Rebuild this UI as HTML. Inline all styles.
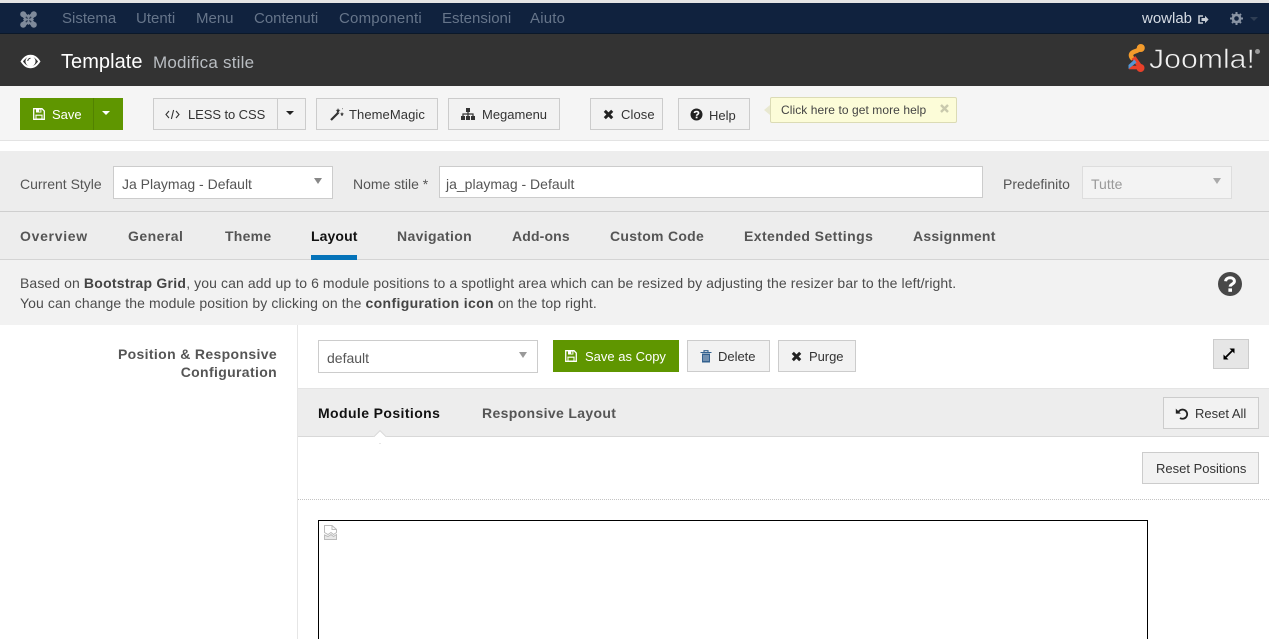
<!DOCTYPE html>
<html lang="it"><head><meta charset="utf-8"><title>Template</title>
<style>
html,body{margin:0;padding:0;width:1269px;height:639px;overflow:hidden;background:#fff;font-family:"Liberation Sans",Arial,sans-serif;color:#333}
*{box-sizing:border-box}
#p{position:absolute;left:0;top:0;width:1269px;height:639px;overflow:hidden}
.a{position:absolute}
.t{position:absolute;white-space:nowrap;line-height:18px}
.nav{font-size:15px;color:#66758a;top:10px}
.btn{position:absolute;border:1px solid #ccc;background:#f2f2f2;height:32px;font-size:13px;line-height:31px;color:#333;white-space:nowrap;padding-left:0}
.btn span{position:absolute;top:0}
.btn svg{position:absolute}
.tab{position:absolute;top:227px;font-size:14px;font-weight:bold;color:#555;letter-spacing:.35px;line-height:18px;white-space:nowrap}
.sel{position:absolute;background:#fff;border:1px solid #ccc;height:33px;font-size:14px;line-height:34px;color:#555;padding-left:8px}
.sel i{position:absolute;width:0;height:0;border-left:4px solid transparent;border-right:4px solid transparent;border-top:6px solid #888;}
</style></head><body><div id="p">
<div class="a" style="left:0;top:0;width:1269px;height:3px;background:#e4e4e4"></div>
<div class="a" style="left:0;top:3px;width:1269px;height:31px;background:#10223e"></div>
<div class="a" style="left:0;top:33px;width:1269px;height:1px;background:#0b1829"></div>
<div class="a" style="left:0;top:34px;width:1269px;height:52px;background:#333"></div>
<div class="a" style="left:0;top:86px;width:1269px;height:54px;background:#f5f5f5"></div>
<div class="a" style="left:0;top:140px;width:1269px;height:1px;background:#e3e3e3"></div>
<div class="a" style="left:0;top:151px;width:1269px;height:109px;background:#ededed"></div>
<div class="a" style="left:0;top:211px;width:1269px;height:1px;background:#cfcfcf"></div>
<div class="a" style="left:0;top:259px;width:1269px;height:1px;background:#d4d4d4"></div>
<div class="a" style="left:0;top:260px;width:1269px;height:65px;background:#f2f2f2"></div>

<!-- top nav -->
<svg class="a" style="left:20px;top:11px" width="17" height="17" viewBox="0 0 17 17"><path d="M3.2 3.2L13.8 13.8M13.8 3.2L3.2 13.8" stroke="#7f8a9a" stroke-width="5"/><circle cx="3.2" cy="3.2" r="3" fill="#7f8a9a"/><circle cx="13.8" cy="3.2" r="3" fill="#7f8a9a"/><circle cx="3.2" cy="13.8" r="3" fill="#7f8a9a"/><circle cx="13.8" cy="13.8" r="3" fill="#7f8a9a"/><path d="M8.5 3L14 8.5 8.5 14 3 8.5Z" fill="#7f8a9a"/><path d="M5.8 5.8L7.6 7.6M11.2 5.8L9.4 7.6M5.8 11.2L7.6 9.4M11.2 11.2L9.4 9.4" stroke="#2c3a50" stroke-width="1.3"/></svg>
<div class="t nav" style="left:62px">Sistema</div>
<div class="t nav" style="left:136px">Utenti</div>
<div class="t nav" style="left:196px">Menu</div>
<div class="t nav" style="left:254px">Contenuti</div>
<div class="t nav" style="left:339px;letter-spacing:.2px">Componenti</div>
<div class="t nav" style="left:442px">Estensioni</div>
<div class="t nav" style="left:530px;letter-spacing:.2px">Aiuto</div>
<div class="t" style="left:1142px;top:10px;font-size:15px;color:#d5dbe3">wowlab</div>
<svg class="a" style="left:1198px;top:15px" width="11" height="9" viewBox="0 0 11 9"><path d="M5 1H1V8H5" fill="none" stroke="#c8ced6" stroke-width="1.6"/><path d="M3.5 3H7V0.8L10.6 4.5 7 8.2V6H3.5Z" fill="#c8ced6"/></svg>
<svg class="a" style="left:1230px;top:12px" width="13" height="13" viewBox="0 0 13 13"><circle cx="6.5" cy="6.5" r="3.6" fill="none" stroke="#8994a4" stroke-width="2.6"/><path d="M6.5 0V13M0 6.5H13M2 2L11 11M11 2L2 11" stroke="#8994a4" stroke-width="2" stroke-dasharray="2.2 8.6 2.2 0"/></svg>
<div class="a" style="left:1250px;top:17px;border-left:4px solid transparent;border-right:4px solid transparent;border-top:4px solid #2f3e54"></div>

<!-- header -->
<svg class="a" style="left:20px;top:54px" width="21" height="15" viewBox="0 0 21 15"><path d="M0.5 7.5C4 2.2 7 0.8 10.5 0.8S17 2.2 20.5 7.5C17 12.8 14 14.2 10.5 14.2S4 12.8 0.5 7.5Z" fill="#fff"/><path d="M3 7.5C5 4.8 6.5 3.8 7.4 3.4A5 5 0 1 0 13.6 3.4C14.5 3.8 16 4.8 18 7.5 16 10.2 13.5 12.4 10.5 12.4S5 10.2 3 7.5Z" fill="#333"/><circle cx="10.5" cy="7" r="4.1" fill="#fff"/><path d="M10.5 4.2A2.8 2.8 0 0 0 7.8 7" fill="none" stroke="#333" stroke-width="1"/></svg>
<div class="t" style="left:61px;top:51px;font-size:20px;line-height:22px;color:#fff;letter-spacing:.05px">Template</div>
<div class="t" style="left:153px;top:53px;font-size:17px;line-height:19px;color:#b9bdc2;letter-spacing:.22px">Modifica stile</div>
<svg class="a" style="left:1128px;top:43px" width="18" height="31" viewBox="0 0 18 31"><path d="M11.5 6C9 9 3.5 8 3 12 2.8 14 4 15 5 16" fill="none" stroke="#f39b2c" stroke-width="4.6"/><circle cx="12.8" cy="5" r="4" fill="#f39b2c"/><path d="M5.5 14.5L13 25" stroke="#e8412a" stroke-width="4.8"/><circle cx="12.5" cy="25" r="4" fill="#e8412a"/><path d="M1 24.5H11" stroke="#e8412a" stroke-width="3.6"/><path d="M0.5 22L6.5 16.5 8.5 19.5 0.5 26Z" fill="#5596d2"/></svg>
<div class="t" style="left:1149px;top:44px;font-size:27px;line-height:30px;color:#f0f0f0;-webkit-text-stroke:.6px #333;transform-origin:left top;transform:scaleX(1.12)">Joomla!</div>
<div class="a" style="left:1255px;top:49px;width:5px;height:5px;border-radius:3px;background:#9a9a9a"></div>

<!-- toolbar -->
<div class="a" style="left:20px;top:98px;width:103px;height:32px;background:#5f9600"></div>
<div class="a" style="left:93px;top:98px;width:1px;height:32px;background:#528200"></div>
<svg class="a" style="left:33px;top:108px" width="12" height="12" viewBox="0 0 12 12"><path fill="none" stroke="#fff" stroke-width="1.3" d="M.7.7H9L11.3 3V11.3H.7Z"/><path fill="#fff" d="M3 1H8.4V4.5H3ZM2.4 6.6H9.6V7.8H2.4Z"/><rect x="6.2" y="1.6" width="1.2" height="2.2" fill="#5f9600"/><path d="M3 7V11H9V7" fill="none" stroke="#fff" stroke-width="1"/></svg>
<div class="t" style="left:52px;top:106px;font-size:13px;color:#fff">Save</div>
<div class="a" style="left:102px;top:111px;border-left:4px solid transparent;border-right:4px solid transparent;border-top:4px solid #fff"></div>

<div class="btn" style="left:153px;top:98px;width:125px"><span style="left:34px;letter-spacing:-.08px">LESS to CSS</span>
<svg style="left:11px;top:10px" width="15" height="11" viewBox="0 0 15 11"><path d="M4 2L1 5.5 4 9M11 2L14 5.5 11 9M8.6 1L6.4 10" fill="none" stroke="#333" stroke-width="1.1"/></svg></div>
<div class="btn" style="left:277px;top:98px;width:29px"><i class="a" style="left:8px;top:12px;border-left:4px solid transparent;border-right:4px solid transparent;border-top:4px solid #222"></i></div>
<div class="btn" style="left:316px;top:98px;width:122px"><span style="left:32px;letter-spacing:.08px">ThemeMagic</span>
<svg style="left:13px;top:9px" width="14" height="13" viewBox="0 0 14 13"><path d="M1 12L8.5 4.5" stroke="#333" stroke-width="2.2"/><path d="M8 0L8.7 1.7 10.5 2 9 3 9.4 4.7 8 3.7 6.7 4.7 7 3 5.7 2 7.4 1.7Z M12 4L12.6 5.4 14 5.7 12.8 6.6 13 8 12 7.2 11 8 11.2 6.6 10 5.7 11.4 5.4Z M12.5 0L13 1 12 1.2Z" fill="#333"/></svg></div>
<div class="btn" style="left:448px;top:98px;width:112px"><span style="left:33px">Megamenu</span>
<svg style="left:12px;top:9px" width="14" height="13" viewBox="0 0 14 13"><path fill="#333" d="M5 0H9V4H5ZM0 8H4V12H0ZM5 8H9V12H5ZM10 8H14V12H10Z"/><path d="M2 8V6H12V8M7 4V8" fill="none" stroke="#333" stroke-width="1.2"/></svg></div>
<div class="btn" style="left:590px;top:98px;width:73px"><span style="left:30px;letter-spacing:.1px">Close</span>
<svg style="left:12px;top:10px" width="11" height="11" viewBox="0 0 11 11"><path d="M1.8 1.8L9.2 9.2M9.2 1.8L1.8 9.2" stroke="#222" stroke-width="3"/></svg></div>
<div class="btn" style="left:678px;top:98px;width:72px"><span style="left:30px;top:1px">Help</span>
<svg style="left:11px;top:9px" width="13" height="13" viewBox="0 0 13 13"><circle cx="6.5" cy="6.5" r="6" fill="#222"/><path d="M4.4 5C4.6 3 8.6 3 8.6 5.1 8.6 6.4 6.6 6.4 6.6 7.7" fill="none" stroke="#fff" stroke-width="1.6"/><rect x="5.7" y="8.6" width="1.8" height="1.7" fill="#fff"/></svg></div>
<div class="a" style="left:770px;top:97px;width:187px;height:26px;background:#fcfcd8;border:1px solid #dbdbb5;border-radius:2px"></div>
<div class="a" style="left:764px;top:105px;width:0;height:0;border-top:5px solid transparent;border-bottom:5px solid transparent;border-right:6px solid #e8e8d0"></div>
<div class="t" style="left:781px;top:101px;font-size:12px;letter-spacing:.07px;color:#444">Click here to get more help</div>
<svg class="a" style="left:940px;top:104px" width="9" height="9" viewBox="0 0 9 9"><path d="M1 1L8 8M8 1L1 8" stroke="#c9c9ad" stroke-width="2.4"/></svg>

<!-- style row -->
<div class="t" style="left:20px;top:175px;font-size:14px;color:#555">Current Style</div>
<div class="sel" style="left:113px;top:166px;width:220px">Ja Playmag - Default<i style="left:200px;top:11px"></i></div>
<div class="t" style="left:353px;top:175px;font-size:14px;color:#555;letter-spacing:-.03px">Nome stile *</div>
<div class="sel" style="left:439px;top:166px;width:544px;height:32px;line-height:34px;padding-left:6px">ja_playmag - Default</div>
<div class="t" style="left:1003px;top:175px;font-size:14px;color:#555">Predefinito</div>
<div class="sel" style="left:1082px;top:166px;width:150px;background:#f3f3f3;border-color:#ddd;color:#999">Tutte<i style="left:130px;top:11px;border-top-color:#aaa"></i></div>

<!-- tabs -->
<div class="tab" style="left:20px;letter-spacing:.7px">Overview</div>
<div class="tab" style="left:128px;letter-spacing:.45px">General</div>
<div class="tab" style="left:225px;letter-spacing:.25px">Theme</div>
<div class="tab" style="left:311px;color:#111;letter-spacing:.1px">Layout</div>
<div class="a" style="left:311px;top:255px;width:46px;height:5px;background:#0573b9"></div>
<div class="tab" style="left:397px">Navigation</div>
<div class="tab" style="left:512px;letter-spacing:.15px">Add-ons</div>
<div class="tab" style="left:610px;letter-spacing:.28px">Custom Code</div>
<div class="tab" style="left:744px;letter-spacing:.42px">Extended Settings</div>
<div class="tab" style="left:913px;letter-spacing:.25px">Assignment</div>

<!-- description -->
<div class="t" style="left:20px;top:273px;font-size:14px;color:#4c4c4c;line-height:20px;letter-spacing:.095px">Based on <b style="letter-spacing:.25px;color:#444">Bootstrap Grid</b>, you can add up to 6 module positions to a spotlight area which can be resized by adjusting the resizer bar to the left/right.<br>You can change the module position by clicking on the <b style="letter-spacing:.35px;color:#444">configuration icon</b> on the top right.</div>
<svg class="a" style="left:1218px;top:272px" width="24" height="24" viewBox="0 0 24 24"><circle cx="12" cy="12" r="12" fill="#484848"/><path d="M7.6 9.2C8 4.6 16.4 4.6 16.4 9.3 16.4 12.2 12.2 12 12.2 14.6" fill="none" stroke="#fff" stroke-width="3"/><rect x="10.4" y="16.4" width="3.6" height="3.4" fill="#fff"/></svg>

<!-- left col -->
<div class="a" style="left:297px;top:325px;width:1px;height:314px;background:#e6e6e6"></div>
<div class="t" style="left:60px;width:217px;top:345px;font-size:14px;font-weight:bold;color:#555;text-align:right;letter-spacing:.35px;white-space:normal">Position &amp; Responsive Configuration</div>

<!-- layout toolbar -->
<div class="sel" style="left:318px;top:340px;width:220px;line-height:34px">default<i style="left:200px;top:11px;border-top-color:#999"></i></div>
<div class="a" style="left:553px;top:340px;width:126px;height:32px;background:#5f9600"></div>
<svg class="a" style="left:565px;top:350px" width="12" height="12" viewBox="0 0 12 12"><path fill="none" stroke="#fff" stroke-width="1.3" d="M.7.7H9L11.3 3V11.3H.7Z"/><path fill="#fff" d="M3 1H8.4V4.5H3ZM2.4 6.6H9.6V7.8H2.4Z"/><rect x="6.2" y="1.6" width="1.2" height="2.2" fill="#5f9600"/><path d="M3 7V11H9V7" fill="none" stroke="#fff" stroke-width="1"/></svg>
<div class="t" style="left:585px;top:348px;font-size:13px;color:#fff">Save as Copy</div>
<div class="btn" style="left:687px;top:340px;width:83px"><span style="left:30px;letter-spacing:-.02px">Delete</span>
<svg style="left:12px;top:9px" width="12" height="13" viewBox="0 0 12 13"><path d="M0.5 2.5H11.5M4 2.5V0.7H8V2.5" fill="none" stroke="#33618f" stroke-width="1.1"/><path d="M2 3.5H10V12.5H2Z" fill="#33618f"/><path d="M4 5V11M6 5V11M8 5V11" stroke="#cfd8e0" stroke-width=".8"/></svg></div>
<div class="btn" style="left:778px;top:340px;width:78px"><span style="left:30px;letter-spacing:-.05px">Purge</span>
<svg style="left:12px;top:10px" width="11" height="11" viewBox="0 0 11 11"><path d="M1.8 1.8L9.2 9.2M9.2 1.8L1.8 9.2" stroke="#222" stroke-width="3"/></svg></div>
<div class="btn" style="left:1213px;top:339px;width:36px;height:30px;background:#e6e6e6">
<svg style="left:9px;top:8px" width="12" height="12" viewBox="0 0 12 12"><path d="M3 9L9 3" stroke="#000" stroke-width="1.8"/><path d="M6.5.5H11.5V5.5ZM.5 6.5V11.5H5.5Z" fill="#000"/></svg></div>

<!-- sub tabs -->
<div class="a" style="left:298px;top:388px;width:971px;height:49px;background:#ededed;border-top:1px solid #e4e4e4;border-bottom:1px solid #d8d8d8"></div>
<div class="tab" style="left:318px;top:404px;color:#111;letter-spacing:.4px">Module Positions</div>
<div class="tab" style="left:482px;top:404px;letter-spacing:.35px">Responsive Layout</div>
<div class="a" style="left:375px;top:432px;width:10px;height:10px;background:#fff;border:1px solid #d8d8d8;transform:rotate(45deg)"></div>
<div class="a" style="left:370px;top:437px;width:20px;height:6px;background:#fff"></div>
<div class="btn" style="left:1163px;top:397px;width:96px"><span style="left:31px">Reset All</span>
<svg style="left:11px;top:9px" width="14" height="13" viewBox="0 0 14 13"><path d="M3.5 5A4.6 4.6 0 1 1 5 11" fill="none" stroke="#222" stroke-width="1.8"/><path d="M0.8 1.6V6.6H5.8Z" fill="#222"/></svg></div>
<div class="btn" style="left:1142px;top:452px;width:117px"><span style="left:13px">Reset Positions</span></div>
<div class="a" style="left:298px;top:499px;width:971px;border-top:1px dotted #c4c4c4"></div>

<!-- broken iframe/img -->
<div class="a" style="left:318px;top:520px;width:830px;height:125px;border:1px solid #000;background:#fff"></div>
<svg class="a" style="left:324px;top:525px" width="13" height="15" viewBox="0 0 13 15"><path d="M0.5 0.5H8L12.5 4.5V7.5L9.5 9.5 7 7.5 4 9.5 0.5 7.5Z" fill="#fff" stroke="#bbb"/><path d="M8 .5V4.5H12.5" fill="none" stroke="#bbb"/><path d="M0.5 10L4 11.5 7 9.5 9.5 11.5 12.5 9.5V14.5H0.5Z" fill="#e8e8e8" stroke="#bbb"/></svg>
</div></body></html>
